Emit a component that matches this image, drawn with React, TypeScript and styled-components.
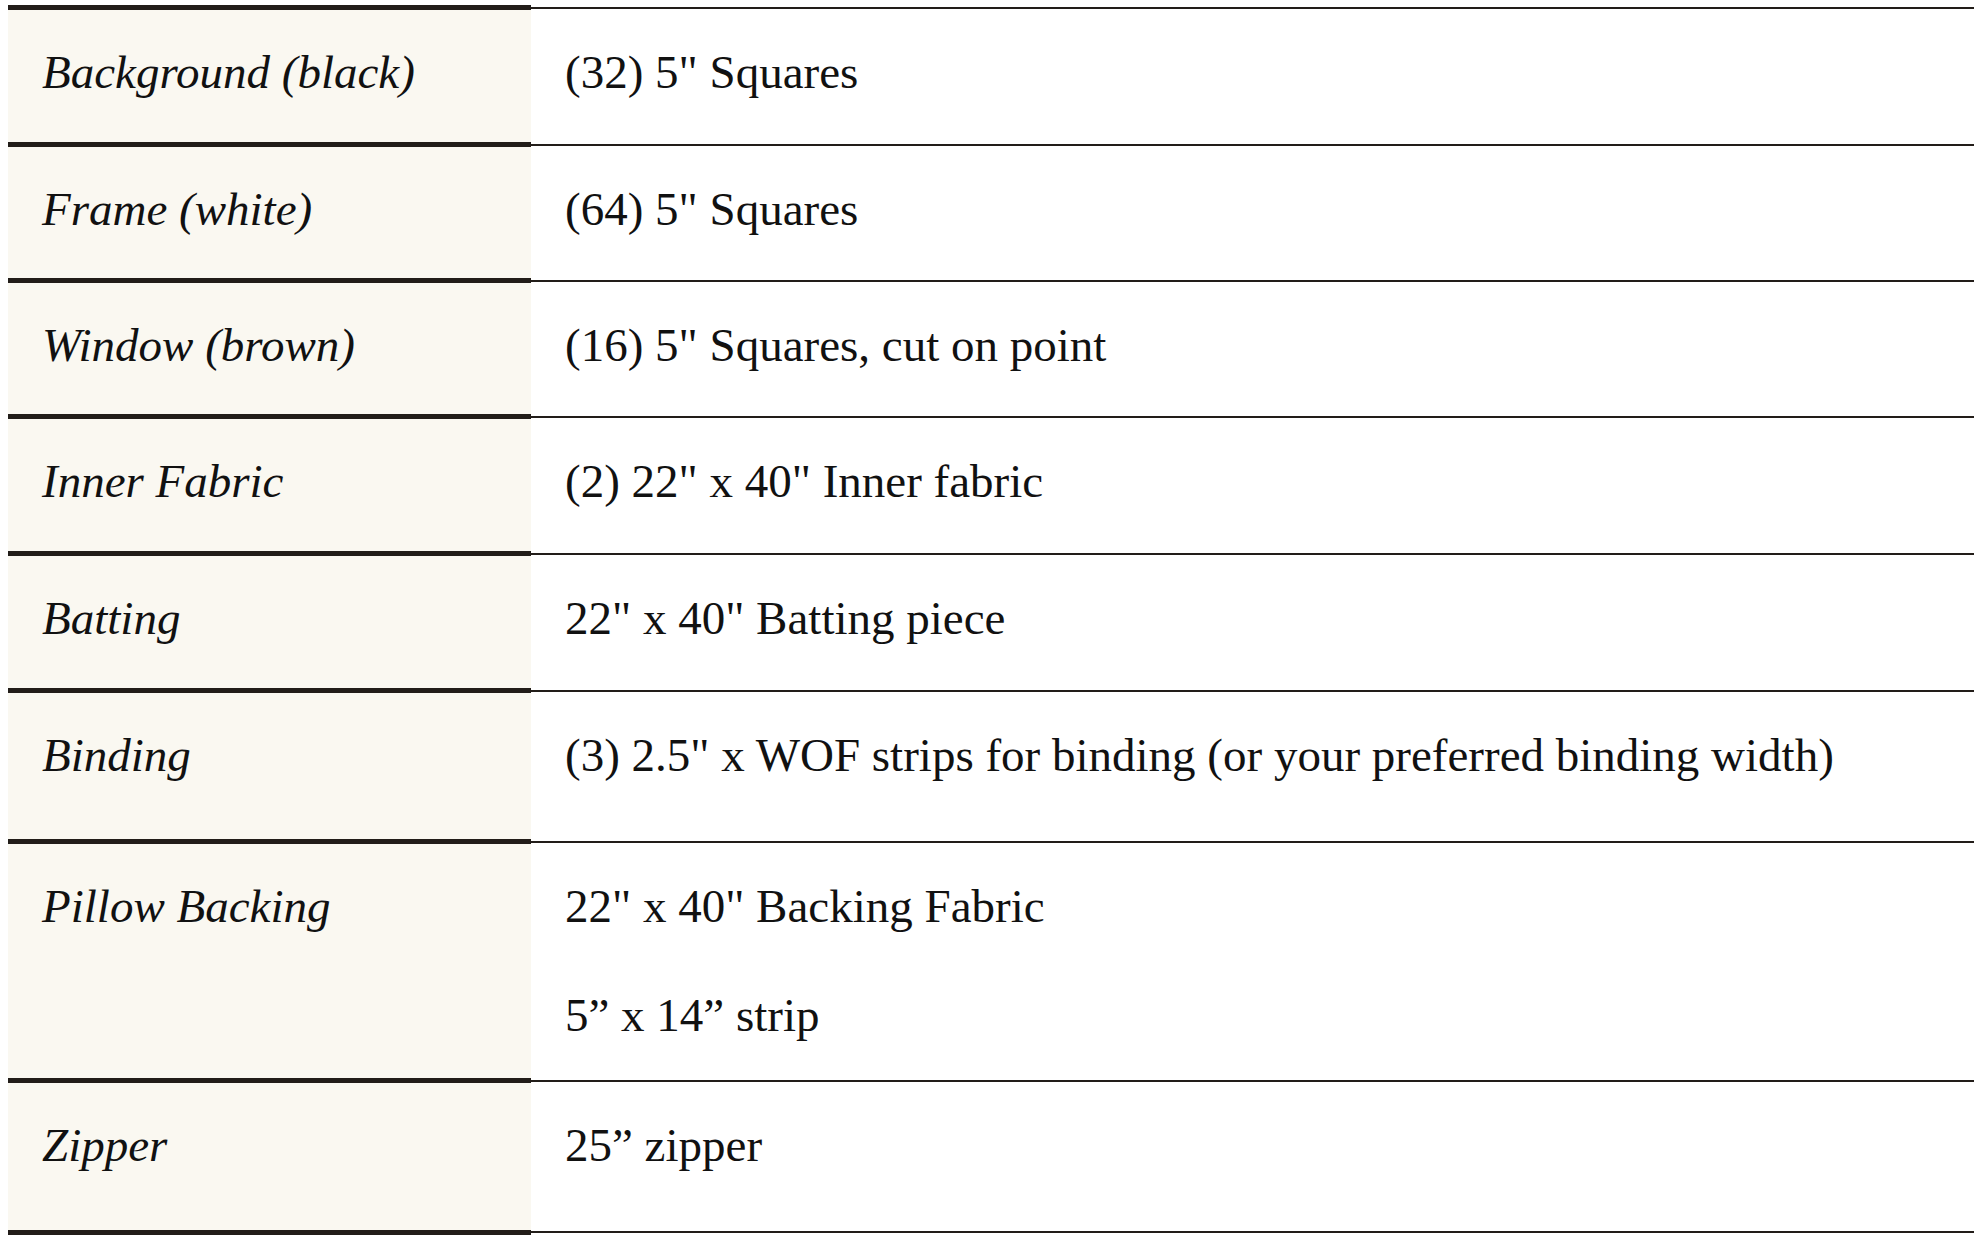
import React from "react";
import styled, { createGlobalStyle } from "styled-components";

const ink = "#221d19";
const cream = "#faf8f1";

const GlobalStyle = createGlobalStyle`
  body {
    margin: 5px 8px 8px;
    background: #ffffff;
    color: #111111;
    font-family: "Liberation Serif", "Times New Roman", serif;
  }
`;

const Table = styled.div`
  display: flex;
  flex-direction: column;
  width: 100%;
`;

const Row = styled.div<{ $height: number }>`
  display: grid;
  grid-template-columns: 523px 1fr;
  height: ${(p) => p.$height}px;
`;

const LabelCell = styled.div<{ $last?: boolean }>`
  background: ${cream};
  border-top: 5px solid ${ink};
  border-bottom: ${(p) => (p.$last ? `5px solid ${ink}` : "none")};
  padding: 34px 20px 0 34px;
  font-size: 47px;
  line-height: 1.2;
  font-style: italic;
`;

const ValueCell = styled.div<{ $last?: boolean }>`
  border-top: 2px solid ${ink};
  margin-top: 2px;
  border-bottom: ${(p) => (p.$last ? `2px solid ${ink}` : "none")};
  margin-bottom: ${(p) => (p.$last ? "2px" : "0")};
  padding: 35px 20px 0 34px;
  font-size: 47px;
  line-height: 1.2;
`;

const Para = styled.p`
  margin: 0 0 53px;
`;

type Item = {
  label: string;
  values: string[];
  height: number;
};

const items: Item[] = [
  { label: "Background (black)", values: ["(32) 5\" Squares"], height: 137 },
  { label: "Frame (white)", values: ["(64) 5\" Squares"], height: 136 },
  { label: "Window (brown)", values: ["(16) 5\" Squares, cut on point"], height: 136 },
  { label: "Inner Fabric", values: ["(2) 22\" x 40\" Inner fabric"], height: 137 },
  { label: "Batting", values: ["22\" x 40\" Batting piece"], height: 137 },
  {
    label: "Binding",
    values: ["(3) 2.5\" x WOF strips for binding (or your preferred binding width)"],
    height: 151,
  },
  {
    label: "Pillow Backing",
    values: ["22\" x 40\" Backing Fabric", "5\u201d x 14\u201d strip"],
    height: 239,
  },
  { label: "Zipper", values: ["25\u201d zipper"], height: 157 },
];

export default function App() {
  return (
    <>
      <GlobalStyle />
      <Table>
        {items.map((item, i) => {
          const last = i === items.length - 1;
          return (
            <Row key={item.label} $height={item.height}>
              <LabelCell $last={last}>{item.label}</LabelCell>
              <ValueCell $last={last}>
                {item.values.map((v) => (
                  <Para key={v}>{v}</Para>
                ))}
              </ValueCell>
            </Row>
          );
        })}
      </Table>
    </>
  );
}
